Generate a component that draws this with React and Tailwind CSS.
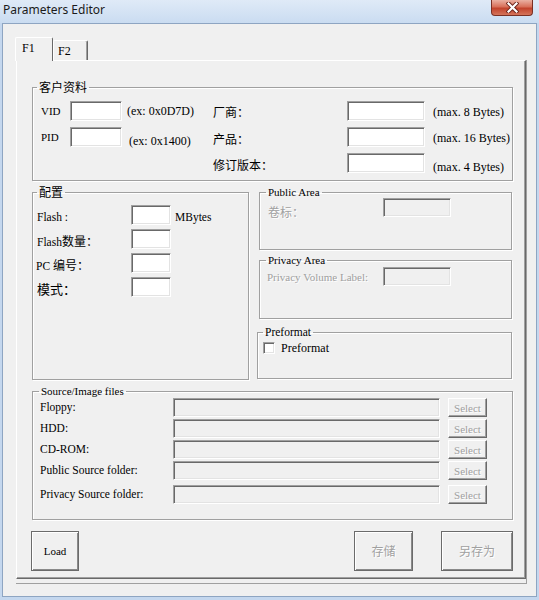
import React from "react";

const inputBase =
  "shrink-0 border border-t-[#a0a0a0] border-l-[#a0a0a0] border-b-white border-r-white shadow-[inset_1px_1px_0_#696969,inset_-1px_-1px_0_#e3e3e3]";

function Field({ className }) {
  return <div className={`${inputBase} bg-white ${className}`} />;
}
function DisabledField({ className }) {
  return <div className={`${inputBase} bg-[#f0f0f0] ${className}`} />;
}

const txt = "[font-family:Liberation_Serif,Noto_Sans_CJK_SC,serif] text-black";
const cjk = "[font-family:Noto_Sans_CJK_SC,sans-serif] text-black";

function Legend({ children, className }) {
  return (
    <legend className={`px-[2px] leading-[14px] font-normal ${className}`}>{children}</legend>
  );
}

const groupBox =
  "border border-[#a0a0a0] shadow-[inset_1px_1px_0_#fff,1px_1px_0_#fff] shrink-0";

function SelectBtn() {
  return (
    <div className="ml-[8px] w-[39px] h-[19px] shrink-0 flex items-center justify-center border border-t-white border-l-white border-b-[#696969] border-r-[#696969] shadow-[inset_-1px_-1px_0_#a0a0a0] [font-family:Liberation_Serif,serif] text-[11px] leading-[12px] text-[#a0a0a0] [text-shadow:1px_1px_0_#fff]">
      Select
    </div>
  );
}

function SourceRow({ label }) {
  return (
    <div className="flex items-center h-[19px]">
      <div className={`pl-[7px] w-[140px] text-[11.5px] leading-[13px] ${txt}`}>{label}</div>
      <DisabledField className="w-[267px] h-[19px]" />
      <SelectBtn />
    </div>
  );
}

export default function App() {
  return (
    <div className="w-[539px] h-[600px] bg-[#c4d7ee] flex flex-col overflow-hidden">
      {/* title bar */}
      <div className="h-[23px] shrink-0 flex items-start bg-[linear-gradient(to_bottom,#dfeaf7,#cadcf1)]">
        <div className="pl-[3px] pt-[3px] [font-family:Noto_Sans,sans-serif] text-[12px] leading-[14px] text-[#1b1b1b]">
          Parameters Editor
        </div>
        <div className="ml-auto mr-[6px] w-[42px] h-[16px] rounded-b-[4px] border border-t-0 border-[#7a3024] bg-[linear-gradient(to_bottom,#eab0a2,#d8705a_45%,#c2432c_55%,#d4745a)] flex items-center justify-center">
          <svg width="13" height="11" viewBox="0 0 13 11">
            <path d="M2.5 1.5 L10.5 9.5 M10.5 1.5 L2.5 9.5" stroke="#6b2219" strokeWidth="4" strokeLinecap="square" />
            <path d="M2.5 1.5 L10.5 9.5 M10.5 1.5 L2.5 9.5" stroke="#ffffff" strokeWidth="2.2" strokeLinecap="square" />
          </svg>
        </div>
      </div>

      {/* client area */}
      <div className="flex-1 ml-[2px] mr-[2px] mb-[3px] border border-[#8ea5c2] bg-[#f0f0f0] pt-[13px] pl-[13px] flex flex-col">
        {/* tabs */}
        <div className="flex items-end h-[24px] -ml-[1px] relative z-10 -mb-[1px]">
          <div className="w-[38px] h-[24px] bg-[#f0f0f0] border-l border-t border-r border-l-white border-t-white border-r-[#696969] rounded-t-[2px] pl-[6px] pt-[3px]">
            <div className={`text-[12px] leading-[14px] ${txt}`}>F1</div>
          </div>
          <div className="w-[35px] h-[20px] mb-[1px] bg-[#f0f0f0] border-l border-t border-r border-l-white border-t-white border-r-[#696969] shadow-[inset_-1px_0_0_#a0a0a0] rounded-t-[2px] pl-[4px] pt-[3px]">
            <div className={`text-[12px] leading-[14px] ${txt}`}>F2</div>
          </div>
        </div>

        {/* panel wrapper (outer frame) */}
        <div className="w-[511px] border-r border-b border-[#a0a0a0] pb-[4px]">
          <div className="w-[510px] h-[519px] border-t border-l border-r border-b border-t-white border-l-white border-r-[#696969] border-b-[#696969] shadow-[inset_-1px_-1px_0_#a0a0a0] flex flex-col">
            {/* 客户资料 */}
            <fieldset className={`${groupBox} ml-[15px] mt-[19px] w-[481px]`}>
              <Legend className={`ml-[4px] text-[12px] ${cjk}`}>客户资料</Legend>
              <div className="pt-[7px] pb-[7px] flex flex-col gap-[6px]">
                <div className="flex items-center h-[20px]">
                  <div className={`pl-[8px] w-[37px] text-[11px] leading-[12px] ${txt}`}>VID</div>
                  <Field className="w-[52px] h-[20px]" />
                  <div className={`ml-[5px] w-[86px] text-[12px] leading-[14px] ${txt}`}>(ex: 0x0D7D)</div>
                  <div className={`w-[134px] text-[12px] leading-[14px] pt-[2px] ${cjk}`}>厂商：</div>
                  <Field className="w-[78px] h-[20px]" />
                  <div className={`ml-[8px] text-[12px] leading-[14px] pt-[2px] ${txt}`}>(max. 8 Bytes)</div>
                </div>
                <div className="flex items-center h-[20px]">
                  <div className={`pl-[8px] w-[37px] text-[11px] leading-[12px] ${txt}`}>PID</div>
                  <Field className="w-[52px] h-[20px]" />
                  <div className={`ml-[5px] pl-[2px] w-[86px] pt-[7px] text-[12px] leading-[14px] ${txt}`}>(ex: 0x1400)</div>
                  <div className={`w-[134px] text-[12px] leading-[14px] pt-[4px] ${cjk}`}>产品：</div>
                  <Field className="w-[78px] h-[20px]" />
                  <div className={`ml-[8px] text-[12px] leading-[14px] pt-[2px] ${txt}`}>(max. 16 Bytes)</div>
                </div>
                <div className="flex items-center h-[20px]">
                  <div className="w-[180px] shrink-0" />
                  <div className={`w-[134px] text-[12px] leading-[14px] pt-[3px] ${cjk}`}>修订版本：</div>
                  <Field className="w-[78px] h-[20px]" />
                  <div className={`ml-[8px] text-[12px] leading-[14px] pt-[8px] ${txt}`}>(max. 4 Bytes)</div>
                </div>
              </div>
            </fieldset>

            {/* middle row */}
            <div className="flex items-start ml-[15px] mt-[4px]">
              {/* 配置 */}
              <fieldset className={`${groupBox} w-[217px] h-[195px]`}>
                <Legend className={`ml-[4px] text-[12px] ${cjk}`}>配置</Legend>
                <div className="pt-[6px] flex flex-col gap-[4px]">
                  <div className="flex items-center h-[20px]">
                    <div className={`pl-[4px] w-[98px] pt-[4px] text-[11.5px] leading-[14px] ${txt}`}>Flash :</div>
                    <Field className="w-[40px] h-[20px]" />
                    <div className={`ml-[4px] pt-[4px] text-[11.5px] leading-[14px] ${txt}`}>MBytes</div>
                  </div>
                  <div className="flex items-center h-[20px]">
                    <div className={`pl-[4px] w-[98px] pt-[6px] text-[12px] leading-[14px] ${txt}`}>
                      <span className="text-[11.5px]">Flash</span>数量：
                    </div>
                    <Field className="w-[40px] h-[20px]" />
                  </div>
                  <div className="flex items-center h-[20px]">
                    <div className={`pl-[3px] w-[98px] pt-[6px] text-[12px] leading-[14px] ${txt}`}>
                      <span className="text-[11.5px]">PC </span>编号：
                    </div>
                    <Field className="w-[40px] h-[20px]" />
                  </div>
                  <div className="flex items-center h-[20px]">
                    <div className={`pl-[4px] w-[98px] pt-[4px] text-[13px] leading-[14px] ${cjk}`}>模式：</div>
                    <Field className="w-[40px] h-[20px]" />
                  </div>
                </div>
              </fieldset>

              {/* right column */}
              <div className="ml-[8px] flex flex-col">
                <fieldset className={`${groupBox} ml-[2px] w-[253px] h-[65px]`}>
                  <Legend className={`ml-[6px] text-[11px] ${txt}`}>Public Area</Legend>
                  <div className="-mt-[1px] flex items-start">
                    <div className="pl-[8px] w-[123px] pt-[7px] text-[12px] leading-[14px] text-[#a0a0a0] [text-shadow:1px_1px_0_#fff] [font-family:Noto_Sans_CJK_SC,sans-serif]">
                      卷标：
                    </div>
                    <DisabledField className="w-[68px] h-[19px]" />
                  </div>
                </fieldset>
                <fieldset className={`${groupBox} ml-[2px] mt-[3px] w-[253px] h-[66px]`}>
                  <Legend className={`ml-[6px] text-[11px] ${txt}`}>Privacy Area</Legend>
                  <div className="flex items-center">
                    <div className="pl-[7px] w-[123px] pt-[1px] [font-family:Liberation_Serif,serif] text-[11px] leading-[13px] text-[#a0a0a0] [text-shadow:1px_1px_0_#fff]">
                      Privacy Volume Label:
                    </div>
                    <DisabledField className="w-[68px] h-[19px]" />
                  </div>
                </fieldset>
                <fieldset className={`${groupBox} mt-[6px] w-[255px] h-[54px]`}>
                  <Legend className={`ml-[5px] text-[11.5px] ${txt}`}>Preformat</Legend>
                  <div className="pl-[5px] pt-[2px] flex items-center">
                    <div className={`${inputBase} bg-white w-[12px] h-[12px]`} />
                    <div className={`ml-[6px] text-[12px] leading-[14px] ${txt}`}>Preformat</div>
                  </div>
                </fieldset>
              </div>
            </div>

            {/* Source/Image files */}
            <fieldset className={`${groupBox} ml-[15px] mt-[4px] w-[481px]`}>
              <Legend className={`ml-[6px] text-[11px] ${txt}`}>Source/Image files</Legend>
              <div className="pb-[15px] flex flex-col gap-[2px]">
                <SourceRow label="Floppy:" />
                <SourceRow label="HDD:" />
                <SourceRow label="CD-ROM:" />
                <SourceRow label="Public Source folder:" />
                <div className="h-[1px]" />
                <SourceRow label="Privacy Source folder:" />
              </div>
            </fieldset>

            {/* buttons */}
            <div className="flex ml-[14px] mt-[11px]">
              <div className="w-[48px] h-[40px] border border-[#6b6b6b] shadow-[inset_1px_1px_0_#fff,inset_-1px_-1px_0_#8a8a8a] flex items-center justify-center">
                <span className={`text-[11px] leading-[12px] ${txt}`}>Load</span>
              </div>
              <div className="ml-[275px] w-[59px] h-[40px] border border-[#6b6b6b] shadow-[inset_1px_1px_0_#fff,inset_-1px_-1px_0_#8a8a8a] flex items-center justify-center">
                <span className="[font-family:Noto_Sans_CJK_SC,sans-serif] text-[12px] leading-[14px] text-[#a0a0a0] [text-shadow:1px_1px_0_#fff]">存储</span>
              </div>
              <div className="ml-[28px] w-[72px] h-[40px] border border-[#6b6b6b] shadow-[inset_1px_1px_0_#fff,inset_-1px_-1px_0_#8a8a8a] flex items-center justify-center">
                <span className="[font-family:Noto_Sans_CJK_SC,sans-serif] text-[12px] leading-[14px] text-[#a0a0a0] [text-shadow:1px_1px_0_#fff]">另存为</span>
              </div>
            </div>
          </div>
        </div>
      </div>
    </div>
  );
}
